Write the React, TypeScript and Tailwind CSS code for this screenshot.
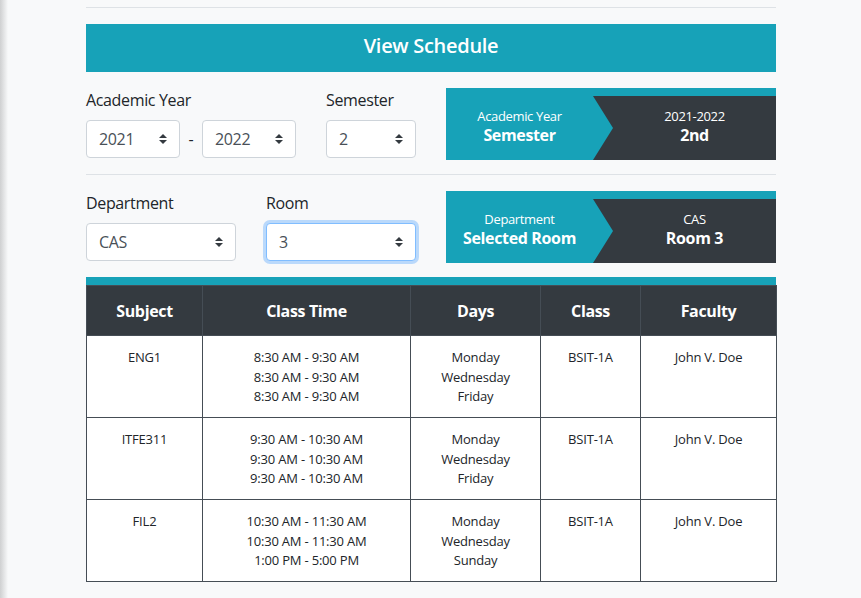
import React from "react";

type Row = {
  subject: string;
  times: string[];
  days: string[];
  cls: string;
  faculty: string;
};

const rows: Row[] = [
  {
    subject: "ENG1",
    times: ["8:30 AM - 9:30 AM", "8:30 AM - 9:30 AM", "8:30 AM - 9:30 AM"],
    days: ["Monday", "Wednesday", "Friday"],
    cls: "BSIT-1A",
    faculty: "John V. Doe",
  },
  {
    subject: "ITFE311",
    times: ["9:30 AM - 10:30 AM", "9:30 AM - 10:30 AM", "9:30 AM - 10:30 AM"],
    days: ["Monday", "Wednesday", "Friday"],
    cls: "BSIT-1A",
    faculty: "John V. Doe",
  },
  {
    subject: "FIL2",
    times: ["10:30 AM - 11:30 AM", "10:30 AM - 11:30 AM", "1:00 PM - 5:00 PM"],
    days: ["Monday", "Wednesday", "Sunday"],
    cls: "BSIT-1A",
    faculty: "John V. Doe",
  },
];

// bootstrap-ish custom select
const Select = ({ value, width, focused }: { value: string; width: string; focused?: boolean }) => (
  <div
    className={`${width} h-[38px] flex items-center justify-between pl-[12px] pr-[12px] bg-white rounded-[4px] border text-[16px] text-[#495057] ${
      focused ? "border-[#80bdff] shadow-[0_0_0_3px_rgba(0,123,255,0.25)]" : "border-[#ced4da]"
    }`}
  >
    <span>{value}</span>
    <svg width="8" height="10" viewBox="0 0 4 5">
      <path d="M2 0L0 2h4zm0 5L0 3h4z" fill="#343a40" />
    </svg>
  </div>
);

const Label = ({ children }: { children: React.ReactNode }) => (
  <div className="text-[16px] leading-[24px] text-[#212529] mb-[8px]">{children}</div>
);

const InfoPanel = ({ top, bottom, value, valueBold }: { top: string; bottom: string; value: string; valueBold: string }) => (
  <div className="w-[330px] bg-[#17a2b8] pt-[8px]">
    <div className="flex h-[64px]">
      <div className="w-[147px] flex flex-col items-center justify-center text-white pb-[4px]">
        <span className="text-[13px] leading-[18px]">{top}</span>
        <span className="text-[16px] leading-[20px] font-bold">{bottom}</span>
      </div>
      <div className="flex-1 bg-[#343a40] [clip-path:polygon(0_0,100%_0,100%_100%,0_100%,20px_50%)] pl-[20px] flex flex-col items-center justify-center text-white pb-[4px]">
        <span className="text-[13px] leading-[18px]">{value}</span>
        <span className="text-[16px] leading-[20px] font-bold">{valueBold}</span>
      </div>
    </div>
  </div>
);

const App = () => {
  return (
    <div className="flex min-h-[598px] bg-[#f8f9fa] font-['Open_Sans',sans-serif] tracking-[-0.35px]">
      <div className="w-[8px] shrink-0 bg-gradient-to-r from-[#cfd0d1] to-[#f8f9fa]" />
      <div className="w-[690px] ml-[78px] pt-[7px]">
        <div className="border-t border-[#dee2e6]" />
        <button className="mt-[16px] w-full h-[48px] pb-[5px] bg-[#17a2b8] text-white text-[20px] font-semibold tracking-[-0.3px]">
          View Schedule
        </button>

        {/* academic year / semester */}
        <div className="flex gap-[30px] mt-[16px]">
          <div className="w-[330px] flex gap-[30px]">
            <div className="w-[210px]">
              <Label>Academic Year</Label>
              <div className="flex items-center justify-between">
                <Select value="2021" width="w-[94px]" />
                <span className="text-[16px] text-[#212529]">-</span>
                <Select value="2022" width="w-[94px]" />
              </div>
            </div>
            <div className="w-[90px]">
              <Label>Semester</Label>
              <Select value="2" width="w-[90px]" />
            </div>
          </div>
          <InfoPanel top="Academic Year" bottom="Semester" value="2021-2022" valueBold="2nd" />
        </div>

        <div className="border-t border-[#dee2e6] mt-[14px]" />

        {/* department / room */}
        <div className="flex gap-[30px] mt-[16px]">
          <div className="w-[330px] flex gap-[30px]">
            <div className="w-[150px]">
              <Label>Department</Label>
              <Select value="CAS" width="w-[150px]" />
            </div>
            <div className="w-[150px]">
              <Label>Room</Label>
              <Select value="3" width="w-[150px]" focused />
            </div>
          </div>
          <InfoPanel top="Department" bottom="Selected Room" value="CAS" valueBold="Room 3" />
        </div>

        {/* schedule table */}
        <div className="mt-[14px] bg-[#17a2b8] pt-[8px]">
          <table className="w-full border-collapse table-fixed">
            <colgroup>
              <col className="w-[116px]" />
              <col className="w-[208px]" />
              <col className="w-[130px]" />
              <col className="w-[100px]" />
              <col className="w-[136px]" />
            </colgroup>
            <thead>
              <tr className="bg-[#343a40] text-white text-[16px] font-bold">
                {["Subject", "Class Time", "Days", "Class", "Faculty"].map((h) => (
                  <th key={h} className="border border-[#454d55] h-[50px] leading-[24px] text-center">
                    {h}
                  </th>
                ))}
              </tr>
            </thead>
            <tbody className="bg-white text-[13px] leading-[19.5px] text-[#212529] tracking-[-0.2px]">
              {rows.map((r) => (
                <tr key={r.subject} className="h-[82px]">
                  <td className="border border-[#454d55] align-top text-center pt-[12px]">{r.subject}</td>
                  <td className="border border-[#454d55] align-top text-center pt-[12px]">
                    {r.times.map((t, i) => (
                      <div key={i}>{t}</div>
                    ))}
                  </td>
                  <td className="border border-[#454d55] align-top text-center pt-[12px]">
                    {r.days.map((d) => (
                      <div key={d}>{d}</div>
                    ))}
                  </td>
                  <td className="border border-[#454d55] align-top text-center pt-[12px]">{r.cls}</td>
                  <td className="border border-[#454d55] align-top text-center pt-[12px]">{r.faculty}</td>
                </tr>
              ))}
            </tbody>
          </table>
        </div>
      </div>
    </div>
  );
};

export default App;
